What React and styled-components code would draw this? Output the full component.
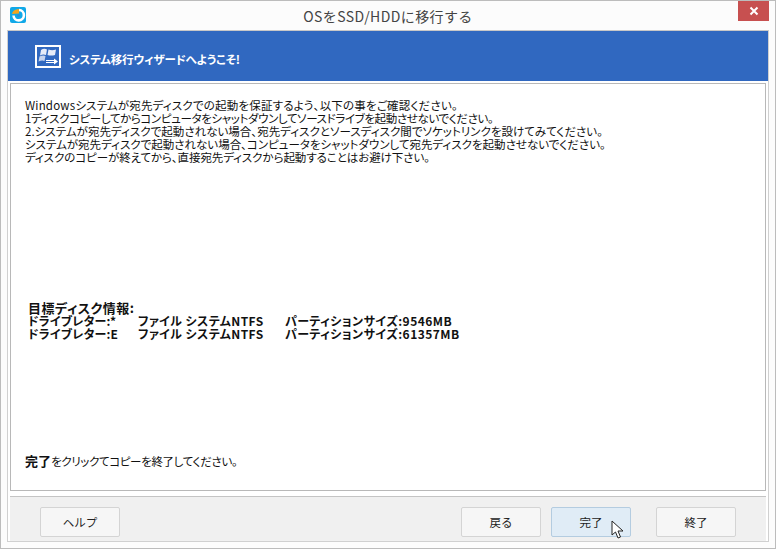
import React from 'react'
import styled, { createGlobalStyle } from 'styled-components'

const GlobalStyle = createGlobalStyle`
  html, body {
    margin: 0;
    padding: 0;
    background: #fcfcfc;
  }
  body {
    font-family: "Noto Sans CJK JP", "Liberation Sans", sans-serif;
    color: #111;
  }
`

const Window = styled.div`
  width: 776px;
  height: 549px;
  box-sizing: border-box;
  border: 1px solid #bcbcbc;
  background: #fcfcfc;
  display: flex;
  flex-direction: column;
  overflow: hidden;
`

const TitleBar = styled.div`
  height: 29px;
  flex: none;
  position: relative;
  display: flex;
  align-items: center;
  justify-content: center;
  font-size: 14px;
  letter-spacing: 0.4px;
  color: #444;
`

const AppIcon = styled.svg`
  position: absolute;
  left: 9px;
  top: 6px;
`

const CloseButton = styled.div`
  position: absolute;
  right: 6px;
  top: 0;
  width: 31px;
  height: 20px;
  background: #c75050;
  display: flex;
  align-items: center;
  justify-content: center;
`

const Frame = styled.div`
  flex: 1;
  margin: 0 6px 6px 6px;
  border: 1px solid #d0d0d0;
  border-top-color: #c8c8c8;
  display: flex;
  flex-direction: column;
  background: #fff;
  min-height: 0;
`

const Banner = styled.div`
  height: 50px;
  flex: none;
  background: #3068c0;
  display: flex;
  align-items: center;
  gap: 8px;
  padding-left: 27px;
  color: #fff;
  font-size: 11.5px;
  font-weight: 700;
`

const BannerText = styled.span`
  margin-top: 6px;
  font-feature-settings: "palt";
  letter-spacing: -0.15px;
`

const Body = styled.div`
  flex: 1;
  margin: 2px 2px 0 2px;
  border: 1px solid #b8b8b8;
  padding: 15px 14px 0;
  display: flex;
  flex-direction: column;
  font-size: 11.5px;
  line-height: 13px;
  font-feature-settings: "palt";
  background: #fff;
  min-height: 0;
`

const Line = styled.div`
  white-space: pre;
  letter-spacing: ${p => p.$spacing}px;
`

const TargetInfo = styled.div`
  margin-top: 137px;
  padding-left: 3px;
  font-weight: 700;
  font-size: 12px;
  letter-spacing: 0.2px;
`

const TargetTitle = styled.div`
  font-size: 13px;
  letter-spacing: 0.5px;
`

const InfoRow = styled.div`
  display: flex;
  white-space: pre;
`

const InfoCell = styled.span`
  flex: none;
  width: ${p => (p.$w ? `${p.$w}px` : 'auto')};
  letter-spacing: ${p => p.$spacing}px;
`

const Hint = styled.div`
  margin-top: auto;
  margin-bottom: 22px;
  letter-spacing: -0.35px;
`

const Strong = styled.b`
  font-weight: 700;
  font-size: 13px;
  letter-spacing: 0;
`

const Footer = styled.div`
  height: 45px;
  flex: none;
  margin: 5px 2px 0 2px;
  box-sizing: border-box;
  border-top: 1px solid #c4c4c4;
  background: #f0f0f0;
  display: flex;
  align-items: flex-start;
  padding: 10px 0 0 30px;
`

const Button = styled.div`
  width: 80px;
  height: 30px;
  box-sizing: border-box;
  border: 1px solid ${p => (p.$hover ? '#b4cce0' : '#d4d4d4')};
  border-radius: 2px;
  background: ${p => (p.$hover ? '#e0ecf6' : '#f6f6f6')};
  display: flex;
  align-items: center;
  justify-content: center;
  font-size: 11.5px;
  color: #222;
  margin-left: ${p => p.$gap || 0}px;
  position: relative;
`

const Cursor = styled.svg`
  position: absolute;
  left: 59px;
  top: 12px;
`

const lines = [
  ['Windowsシステムが宛先ディスクでの起動を保証するよう、以下の事をご確認ください。', 0.19],
  ['1ディスクコピーしてからコンピュータをシャットダウンしてソースドライブを起動させないでください。', -0.37],
  ['2.システムが宛先ディスクで起動されない場合、宛先ディスクとソースディスク間でソケットリンクを設けてみてください。', 0.03],
  ['システムが宛先ディスクで起動されない場合、コンピュータをシャットダウンして宛先ディスクを起動させないでください。', 0],
  ['ディスクのコピーが終えてから、直接宛先ディスクから起動することはお避け下さい。', -0.07],
]

const disks = [
  ['ドライブレター:*', 'ファイル システムNTFS', 'パーティションサイズ:9546MB'],
  ['ドライブレター:E', 'ファイル システムNTFS', 'パーティションサイズ:61357MB'],
]

export default function App() {
  return (
    <>
      <GlobalStyle />
      <Window>
        <TitleBar>
          <AppIcon width="17" height="16" viewBox="0 0 17 16">
            <rect width="16" height="16" rx="2" fill="#10a8e8" />
            <path d="M9 3 A5.2 5.2 0 1 1 3.5 8.5" fill="none" stroke="#fff" strokeWidth="2.6" />
            <path d="M2 7 Q2.5 2.5 9 2 L9 6.5 Z" fill="#f2a51e" />
            <circle cx="8.5" cy="8.5" r="1.5" fill="#2c8fd8" />
          </AppIcon>
          OSをSSD/HDDに移行する
          <CloseButton>
            <svg width="10" height="10" viewBox="0 0 10 10">
              <path d="M1.5 1.5 L8.5 8.5 M8.5 1.5 L1.5 8.5" stroke="#fff" strokeWidth="2" />
            </svg>
          </CloseButton>
        </TitleBar>
        <Frame>
          <Banner>
            <svg width="26" height="23" viewBox="0 0 26 23">
              <rect x="1" y="1" width="24" height="21" fill="none" stroke="#fff" strokeWidth="2" />
              <path d="M6 5 Q9 3 12 4.5 L11 10 Q8 9 5 10.5 Z M13.5 4.5 Q17 6 21 4.5 L20 10 Q16 11 12.5 10 Z" fill="#e6ecf8" />
              <path d="M4.5 11.5 Q8 10 10.5 11 L9.5 16 Q7 15 3.5 16.5 Z" fill="#c6d4ee" />
              <path d="M11 15.5 H20 M11 17.5 H20" stroke="#fff" strokeWidth="1" />
              <path d="M19 13.5 L23 16.5 L19 19.5 Z" fill="#fff" />
            </svg>
            <BannerText>システム移行ウィザードへようこそ!</BannerText>
          </Banner>
          <Body>
            {lines.map(([text, spacing]) => (
              <Line key={text} $spacing={spacing}>{text}</Line>
            ))}
            <TargetInfo>
              <TargetTitle>目標ディスク情報:</TargetTitle>
              {disks.map(row => (
                <InfoRow key={row[0]}>
                  <InfoCell $w={110} $spacing={0.2}>{row[0]}</InfoCell>
                  <InfoCell $w={147} $spacing={0.4}>{row[1]}</InfoCell>
                  <InfoCell $spacing={0.45}>{row[2]}</InfoCell>
                </InfoRow>
              ))}
            </TargetInfo>
            <Hint>
              <Strong>完了</Strong>をクリックてコピーを終了してください。
            </Hint>
          </Body>
          <Footer>
            <Button>ヘルプ</Button>
            <Button $gap={341}>戻る</Button>
            <Button $gap={10} $hover>
              完了
              <Cursor width="13" height="20" viewBox="0 0 13 20">
                <path d="M1 1 L1 15 L4.5 12 L7 18 L9.5 17 L7 11 L12 11 Z" fill="#fff" stroke="#222" strokeWidth="1" />
              </Cursor>
            </Button>
            <Button $gap={25}>終了</Button>
          </Footer>
        </Frame>
      </Window>
    </>
  )
}
